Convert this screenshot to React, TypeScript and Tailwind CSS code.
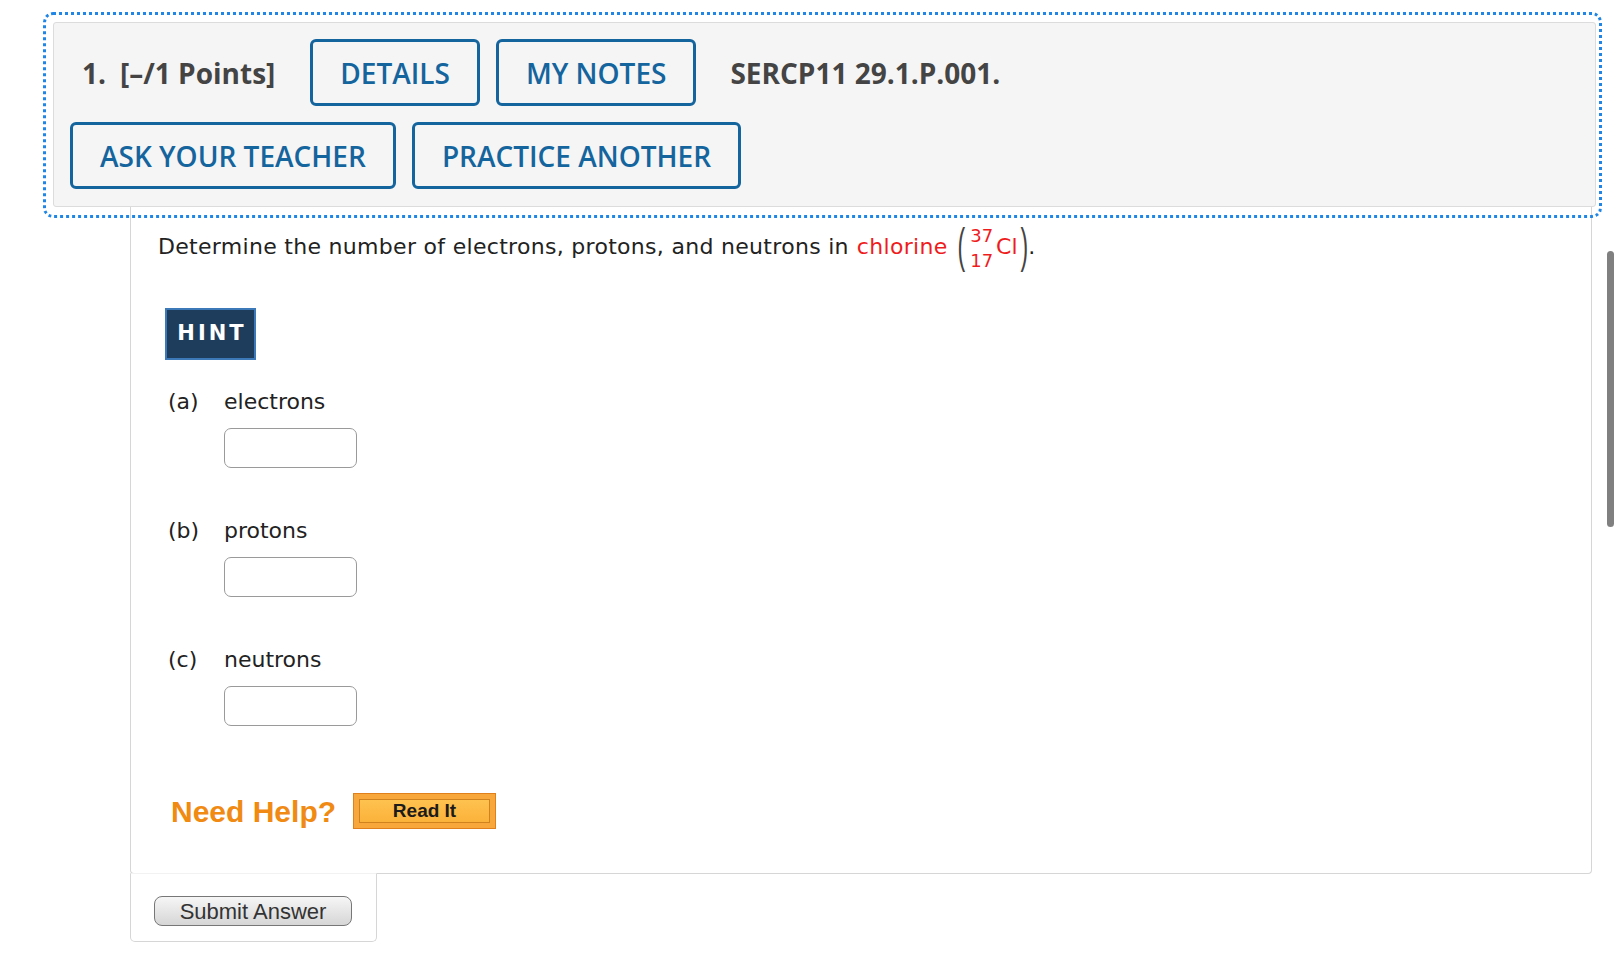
import React from "react";

const verdana = "font-['DejaVu_Sans',Verdana,sans-serif]";

function HeaderButton({ children }: { children: React.ReactNode }) {
  return (
    <button className="flex h-[67px] items-center justify-center rounded-[6px] border-[3px] border-[#14649e] bg-transparent px-[27px] font-['Open_Sans',sans-serif] text-[28px] font-semibold text-[#14649e]">
      {children}
    </button>
  );
}

function Part({ letter, label }: { letter: string; label: string }) {
  return (
    <div className="flex flex-col">
      <div className="flex h-[33px] items-center leading-[33px]">
        <span className="w-[56px]">({letter})</span>
        <span>{label}</span>
      </div>
      <input
        type="text"
        className="ml-[56px] mt-[10px] h-[40px] w-[133px] rounded-[7px] border border-[#9a9a9a] bg-white outline-none"
      />
    </div>
  );
}

export default function App() {
  return (
    <div className="relative h-[955px] w-full overflow-hidden bg-white">
      <div className="relative pl-[53px] pt-[22px]">
        {/* focus ring */}
        <div className="pointer-events-none absolute left-[43px] top-[12px] z-10 h-[206px] w-[1559px] rounded-[10px] border-[3px] border-dotted border-[#1f86e6]" />

        {/* header */}
        <div className="flex h-[185px] w-[1543px] flex-col gap-4 rounded-[3px] border border-[#dcdcdc] bg-[#f5f5f5] p-4 font-['Open_Sans',sans-serif]">
          <div className="flex items-center gap-4">
            <div className="pl-[12px] pr-[19px] text-[28px] font-bold text-[#444]">
              <span className="mr-[14px]">1.</span>
              <span>[–/1 Points]</span>
            </div>
            <HeaderButton>DETAILS</HeaderButton>
            <HeaderButton>MY NOTES</HeaderButton>
            <div className="pl-[18px] text-[28px] font-bold text-[#444]">SERCP11 29.1.P.001.</div>
          </div>
          <div className="flex items-center gap-4">
            <HeaderButton>ASK YOUR TEACHER</HeaderButton>
            <HeaderButton>PRACTICE ANOTHER</HeaderButton>
          </div>
        </div>

        {/* question card */}
        <div
          className={`ml-[77px] w-[1462px] rounded-b-[4px] border border-t-0 border-[#d6d6d6] bg-white pb-[44px] pl-[27px] pt-[23px] text-[22px] text-[#222] ${verdana}`}
        >
          <div className="flex h-[33px] items-center leading-[33px]">
            <span className="tracking-[0.3px]">Determine the number of electrons, protons, and neutrons in</span>
            <span className="ml-[8px] tracking-[0.3px] text-[#ee1c1c]">chlorine</span>
            <span className="ml-[10px] flex items-center">
              <span className="inline-block scale-y-[2.1] font-['Liberation_Sans',sans-serif] text-[23px] leading-none text-[#444]">
                (
              </span>
              <span className="ml-[5px] mt-[4px] flex flex-col items-center gap-[5px] text-[18px] leading-[20px] text-[#ee1c1c]">
                <span>37</span>
                <span>17</span>
              </span>
              <span className="ml-[3px] text-[#ee1c1c]">Cl</span>
              <span className="ml-[3px] inline-block scale-y-[2.1] font-['Liberation_Sans',sans-serif] text-[23px] leading-none text-[#444]">
                )
              </span>
              <span>.</span>
            </span>
          </div>

          <div className="ml-[7px] mt-[45px] flex h-[52px] w-[91px] items-center justify-center border-2 border-[#3b79b9] bg-[#1e3d5c] text-[21px] font-bold tracking-[3px] text-white">
            <span className="pl-[3px]">HINT</span>
          </div>

          <div className="ml-[10px] mt-[25px] flex flex-col gap-[46px]">
            <Part letter="a" label="electrons" />
            <Part letter="b" label="protons" />
            <Part letter="c" label="neutrons" />
          </div>

          <div className="ml-[13px] mt-[67px] flex h-[36px] items-center gap-[17px]">
            <span className="font-['Liberation_Sans',Arial,sans-serif] text-[30px] font-bold text-[#f08a12]">
              Need Help?
            </span>
            <button className="flex h-[36px] w-[143px] items-center justify-center border border-[#e0801c] bg-[#f8a73a] p-[5px]">
              <span className="flex h-full w-full items-center justify-center border border-[#d0821f] bg-gradient-to-b from-[#fec24f] to-[#fbb23a] font-['Liberation_Sans',Arial,sans-serif] text-[19px] font-bold text-[#1c1c1c]">
                Read It
              </span>
            </button>
          </div>
        </div>

        {/* submit tab */}
        <div className="-mt-px ml-[77px] w-[247px] rounded-b-[5px] border border-t-[#f2f2f2] border-x-[#d6d6d6] border-b-[#d6d6d6] bg-white pb-[15px] pl-[23px] pt-[22px]">
          <button className="flex h-[30px] w-[198px] items-center justify-center rounded-[8px] border border-[#777] bg-gradient-to-b from-[#f6f6f6] to-[#d6d6d6] font-['Liberation_Sans',Arial,sans-serif] text-[22px] text-[#333]">
            Submit Answer
          </button>
        </div>
      </div>

      {/* scrollbar thumb */}
      <div className="absolute left-[1607px] top-[251px] h-[276px] w-[7px] rounded-full bg-[#808080]" />
    </div>
  );
}
